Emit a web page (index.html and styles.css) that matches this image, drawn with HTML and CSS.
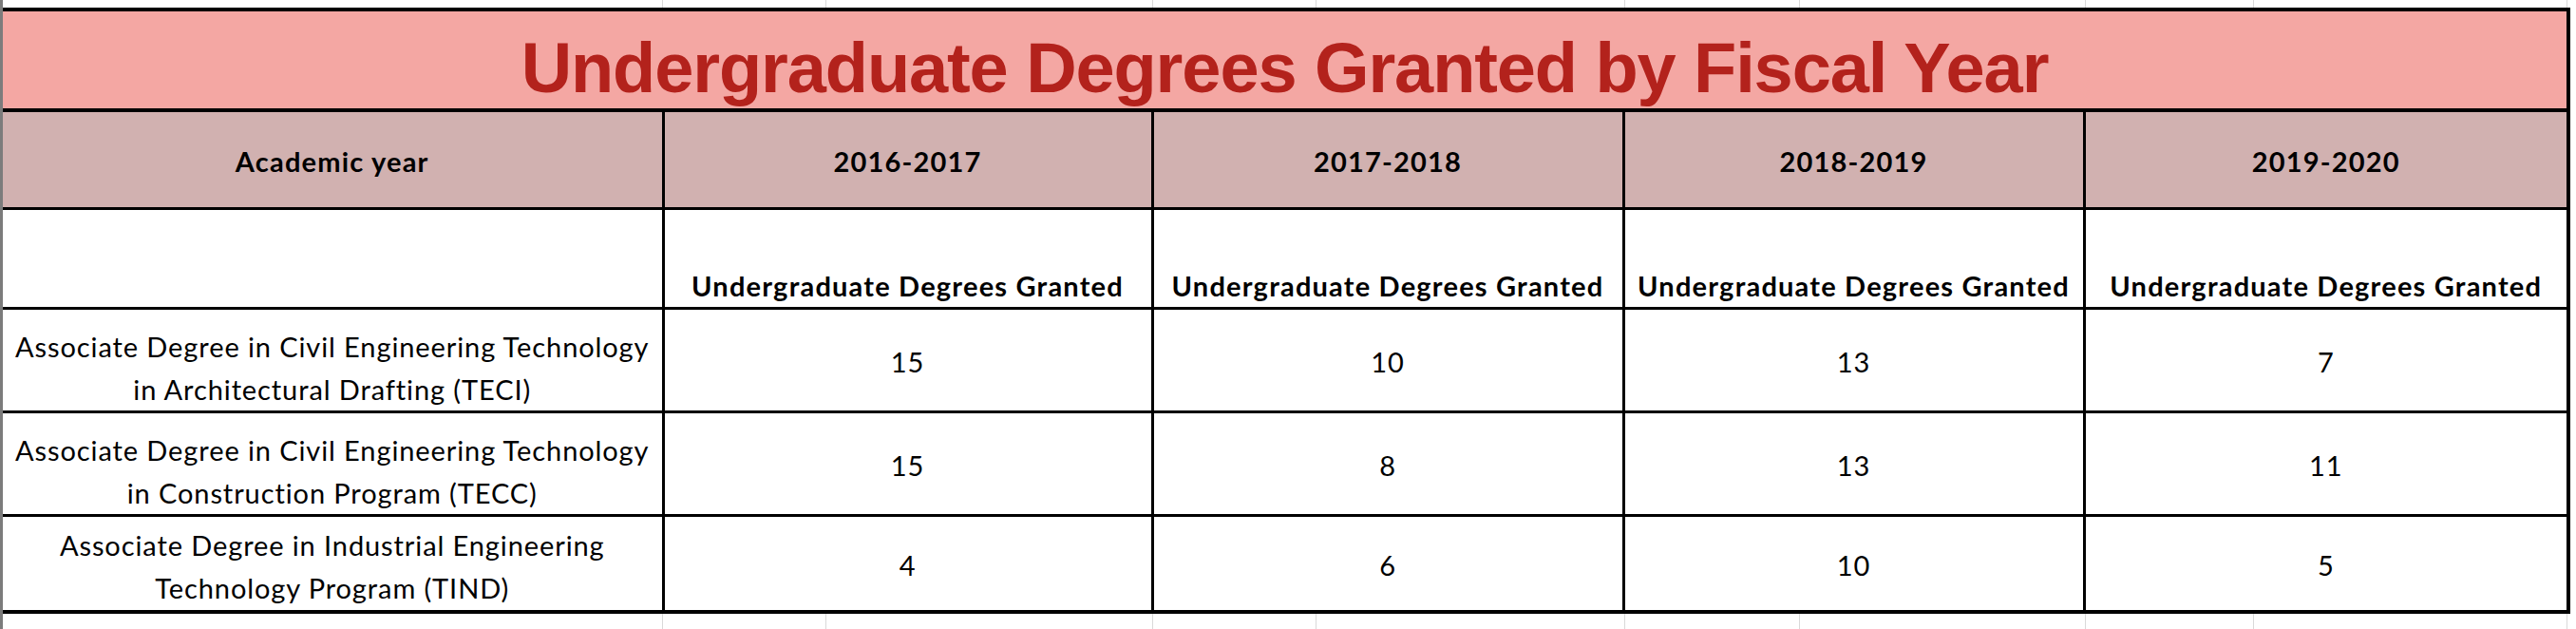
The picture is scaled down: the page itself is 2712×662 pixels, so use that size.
FILE: index.html
```html
<!DOCTYPE html>
<html lang="en">
<head>
  <meta charset="UTF-8">
  <meta name="viewport" content="width=device-width, initial-scale=1.0">
  <title>Undergraduate Degrees Granted by Fiscal Year</title>
  <link rel="stylesheet" href="styles.css">
</head>
<body>
  <div class="sheet">
    <!-- spreadsheet grid above the table -->
    <div class="gridlines top">
      <span></span><span></span><span></span><span></span><span></span><span></span><span></span><span></span><span></span>
    </div>

    <table class="degrees">
      <colgroup>
        <col class="col-program">
        <col class="col-a">
        <col class="col-b">
        <col class="col-c">
        <col class="col-d">
      </colgroup>
      <tr class="title-row">
        <td colspan="5">Undergraduate Degrees Granted by Fiscal Year</td>
      </tr>
      <tr class="year-row">
        <th>Academic year</th>
        <th>2016-2017</th>
        <th>2017-2018</th>
        <th>2018-2019</th>
        <th>2019-2020</th>
      </tr>
      <tr class="label-row">
        <th></th>
        <th>Undergraduate Degrees Granted</th>
        <th>Undergraduate Degrees Granted</th>
        <th>Undergraduate Degrees Granted</th>
        <th>Undergraduate Degrees Granted</th>
      </tr>
      <tr class="data-row">
        <td class="program">Associate Degree in Civil Engineering Technology<br>in Architectural Drafting (TECI)</td>
        <td>15</td>
        <td>10</td>
        <td>13</td>
        <td>7</td>
      </tr>
      <tr class="data-row second">
        <td class="program">Associate Degree in Civil Engineering Technology<br>in Construction Program (TECC)</td>
        <td>15</td>
        <td>8</td>
        <td>13</td>
        <td>11</td>
      </tr>
      <tr class="data-row last">
        <td class="program">Associate Degree in Industrial Engineering<br>Technology Program (TIND)</td>
        <td>4</td>
        <td>6</td>
        <td>10</td>
        <td>5</td>
      </tr>
    </table>

    <!-- spreadsheet grid below the table -->
    <div class="gridlines bottom">
      <span></span><span></span><span></span><span></span><span></span><span></span><span></span><span></span><span></span>
    </div>
  </div>
</body>
</html>
```

FILE: styles.css
```css
body {
  margin: 0;
  background: white;
  font-family: Lato, "Open Sans", sans-serif;
}

.sheet {
  width: 2712px;
  height: 662px;
  overflow: hidden;
  background: white;
  border-left: 3px solid #7c7c7c;
  box-sizing: border-box;
}

/* faint excel gridlines */
.gridlines {
  display: grid;
  grid-template-columns: 695px 172px 344px 172px 325px 184px 301px 177px 330px;
}
.gridlines span {
  border-right: 1px solid #d9d9d9;
}
.gridlines.top {
  height: 8px;
}
.gridlines.bottom {
  height: 20px;
}

.degrees {
  border-collapse: collapse;
  table-layout: fixed;
  width: 2701px;
  color: black;
  font-size: 29px;
  line-height: 45px;
  letter-spacing: 0.9px;
}

.col-program { width: 695px; }
.col-a { width: 515px; }
.col-b { width: 496px; }
.col-c { width: 485px; }
.col-d { width: 510px; }

.degrees td,
.degrees th {
  box-sizing: border-box;
  padding: 0;
  text-align: center;
  border: 3px solid black;
  white-space: nowrap;
}
.degrees tr > :first-child {
  border-left: none;
}
.degrees tr > :last-child {
  border-right-width: 4px;
}

.title-row td {
  height: 106px;
  background: #f4a7a3;
  color: #b3221c;
  font-family: "Liberation Sans", Arial, sans-serif;
  font-weight: bold;
  font-size: 74px;
  line-height: 1;
  letter-spacing: -1.1px;
  padding-top: 18px;
  border-top-width: 4px;
  border-bottom-width: 4px;
}

.year-row th {
  height: 103px;
  background: #d1b1b0;
  font-weight: bold;
  letter-spacing: 1.2px;
  padding-top: 4px;
}

.label-row th {
  height: 105px;
  vertical-align: bottom;
  font-weight: bold;
  letter-spacing: 1.2px;
}

.data-row td {
  height: 103px;
  padding-top: 3px;
}
.data-row.second td {
  height: 102px;
}
.data-row .program {
  padding-top: 16px;
}
.data-row.last td {
  height: 102px;
  border-bottom-width: 4px;
}
.data-row.last .program {
  padding-top: 6px;
}
```
